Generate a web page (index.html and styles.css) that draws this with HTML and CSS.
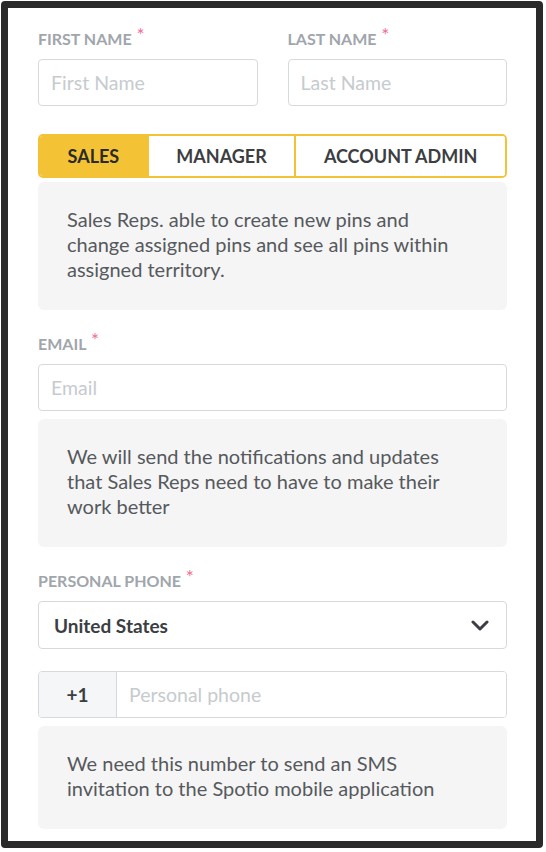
FILE: index.html
```html
<!DOCTYPE html>
<html>
<head>
<meta charset="utf-8">
<link rel="stylesheet" href="styles.css">
</head>
<body>
<div class="frame">
  <form class="form">
    <div class="name-row">
      <div class="field">
        <label class="label">FIRST NAME <span class="req">*</span></label>
        <input class="input" type="text" placeholder="First Name">
      </div>
      <div class="field">
        <label class="label">LAST NAME <span class="req">*</span></label>
        <input class="input" type="text" placeholder="Last Name">
      </div>
    </div>

    <div class="segments">
      <div class="seg active">SALES</div>
      <div class="seg">MANAGER</div>
      <div class="seg">ACCOUNT ADMIN</div>
    </div>
    <div class="note note-seg">Sales Reps. able to create new pins and change assigned pins and see all pins within assigned territory.</div>

    <label class="label label-gap">EMAIL <span class="req">*</span></label>
    <input class="input" type="text" placeholder="Email">
    <div class="note">We will send the notifications and updates that Sales Reps need to have to make their work better</div>

    <label class="label label-gap">PERSONAL PHONE <span class="req">*</span></label>
    <div class="select">
      <span class="select-value">United States</span>
      <svg class="chevron" width="18" height="11" viewBox="0 0 18 11"><polyline points="2,2 9,9 16,2" fill="none" stroke="#3b3e42" stroke-width="3" stroke-linecap="round" stroke-linejoin="round"/></svg>
    </div>
    <div class="phone">
      <div class="prefix">+1</div>
      <input class="phone-input" type="text" placeholder="Personal phone">
    </div>
    <div class="note">We need this number to send an SMS invitation to the Spotio mobile application</div>
  </form>
</div>
</body>
</html>
```

FILE: styles.css
```css
* { box-sizing: border-box; }
html, body {
  margin: 0;
  padding: 0;
  background: #ffffff;
}
body {
  font-family: Lato, "Open Sans", sans-serif;
}
.frame {
  margin: 1px 0 0 1px;
  width: 542px;
  height: 847px;
  border: 7px solid #2a2a2a;
  border-radius: 4px;
  background: #ffffff;
  padding: 20px 29px 0 30px;
}
.form {
  display: flex;
  flex-direction: column;
}
.name-row {
  display: grid;
  grid-template-columns: 1fr 1fr;
  column-gap: 30px;
}
.field {
  display: flex;
  flex-direction: column;
}
.label {
  display: block;
  font-size: 16px;
  line-height: 20px;
  height: 20px;
  font-weight: 700;
  color: #a0a6ab;
  margin-bottom: 11px;
  white-space: nowrap;
}
.label-gap { margin-top: 23px; }
.req {
  color: #f26d93;
  position: relative;
  top: -3px;
  font-size: 19px;
  font-weight: 400;
  margin-left: 1px;
}
.input {
  display: block;
  width: 100%;
  height: 47px;
  border: 1px solid #d6dadd;
  border-radius: 4px;
  padding: 0 12px;
  font-family: Lato, sans-serif;
  font-size: 19.5px;
  color: #3b3e42;
  outline: none;
  background: #fff;
}
.input::placeholder,
.phone-input::placeholder {
  color: #c6cbce;
  opacity: 1;
}
.segments {
  display: flex;
  margin-top: 28px;
  height: 44px;
  border: 2px solid #f4c335;
  border-radius: 5px;
  overflow: hidden;
}
.seg {
  flex: 1 1 auto;
  display: flex;
  align-items: center;
  justify-content: center;
  padding: 0 20px;
  white-space: nowrap;
  font-size: 18px;
  font-weight: 700;
  color: #3c3e42;
  background: #fff;
}
.seg + .seg { border-left: 2px solid #f4c335; }
.seg.active {
  background: #f4c335;
  color: #2a2a2a;
}
.note {
  background: #f5f5f5;
  border-radius: 6px;
  margin-top: 8px;
  padding: 25px 40px 28px 29px;
  font-size: 20px;
  line-height: 25px;
  color: #56595d;
}
.note-seg { margin-top: 4px; }
.select {
  display: flex;
  align-items: center;
  justify-content: space-between;
  height: 48px;
  border: 1px solid #d6dadd;
  border-radius: 4px;
  padding: 0 17px 0 15px;
}
.select-value {
  font-size: 19px;
  font-weight: 700;
  color: #3b3e42;
}
.chevron { display: block; }
.phone {
  display: flex;
  margin-top: 22px;
  height: 47px;
  border: 1px solid #d6dadd;
  border-radius: 4px;
  overflow: hidden;
}
.prefix {
  width: 78px;
  flex: none;
  display: flex;
  align-items: center;
  justify-content: center;
  background: #f5f6f7;
  border-right: 1px solid #d6dadd;
  font-size: 19px;
  font-weight: 700;
  color: #3b3e42;
}
.phone-input {
  flex: 1;
  border: none;
  outline: none;
  padding: 0 12px;
  font-family: Lato, sans-serif;
  font-size: 19.5px;
  color: #3b3e42;
  background: #fff;
}
```
